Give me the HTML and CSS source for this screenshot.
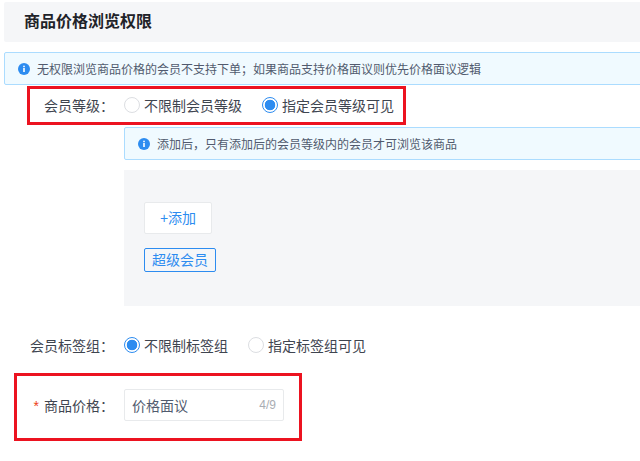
FILE: index.html
```html
<!DOCTYPE html>
<html lang="zh-CN">
<head>
    <meta charset="UTF-8">
    <title>商品价格浏览权限</title>
    <link rel="stylesheet" href="styles.css">
</head>
<body>

<div class="page">
    <h2 class="section-title">商品价格浏览权限</h2>

    <div class="alert">
        <svg class="info-icon" viewBox="0 0 12 12"><circle cx="6" cy="6" r="6" fill="#2d8cf0"/><rect x="5.2" y="5" width="1.6" height="4" fill="#fff"/><rect x="5.2" y="2.7" width="1.6" height="1.5" fill="#fff"/></svg>
        无权限浏览商品价格的会员不支持下单；如果商品支持价格面议则优先价格面议逻辑
    </div>

    <div class="form-row row-level">
        <label class="form-label">会员等级：</label>
        <div class="radio-group">
            <span class="radio"><i class="radio-dot"></i>不限制会员等级</span>
            <span class="radio"><i class="radio-dot checked"></i>指定会员等级可见</span>
        </div>
    </div>

    <div class="indent">
        <div class="alert">
            <svg class="info-icon" viewBox="0 0 12 12"><circle cx="6" cy="6" r="6" fill="#2d8cf0"/><rect x="5.2" y="5" width="1.6" height="4" fill="#fff"/><rect x="5.2" y="2.7" width="1.6" height="1.5" fill="#fff"/></svg>
            添加后，只有添加后的会员等级内的会员才可浏览该商品
        </div>
        <div class="level-panel">
            <button class="add-button">+添加</button>
            <span class="tag">超级会员</span>
        </div>
    </div>

    <div class="form-row row-tags">
        <label class="form-label">会员标签组：</label>
        <div class="radio-group">
            <span class="radio"><i class="radio-dot checked"></i>不限制标签组</span>
            <span class="radio"><i class="radio-dot"></i>指定标签组可见</span>
        </div>
    </div>

    <div class="form-row row-price">
        <label class="form-label"><em class="required">*</em>商品价格：</label>
        <div class="price-input">
            <span>价格面议</span>
            <span class="count">4/9</span>
        </div>
    </div>
</div>

<div class="red-box box-level"></div>
<div class="red-box box-price"></div>

</body>
</html>
```

FILE: styles.css
```css
html, body {
    margin: 0;
    height: 461px;
    overflow: hidden;
    background: #fff;
}
body {
    position: relative;
    font-family: "Liberation Sans", "Noto Sans CJK SC", sans-serif;
    font-size: 14px;
    color: #515a6e;
}
.page {
    padding: 2px 0 0 4px;
    width: 660px;
}
.section-title {
    height: 40px;
    margin: 0 0 10px;
    padding-left: 20px;
    line-height: 40px;
    font-size: 16px;
    font-weight: bold;
    color: #1f2329;
    background: #f5f6f8;
    border-radius: 2px;
}
.alert {
    display: flex;
    align-items: center;
    height: 31px;
    padding-left: 13px;
    font-size: 12px;
    color: #515a6e;
    background: #f0faff;
    border: 1px solid #abdcff;
    border-radius: 2px;
}
.info-icon {
    width: 12px;
    height: 12px;
    margin-right: 7px;
}
.form-row {
    display: flex;
    align-items: center;
    color: #3f4550;
}
.form-label {
    width: 110px;
    margin-right: 10px;
    text-align: right;
}
.radio-group {
    display: flex;
    gap: 20px;
}
.radio {
    display: flex;
    align-items: center;
}
.radio-dot {
    box-sizing: border-box;
    width: 16px;
    height: 16px;
    margin-right: 4px;
    border: 1px solid #dcdee2;
    border-radius: 50%;
    background: #fff;
}
.radio-dot.checked {
    border-color: #2d8cf0;
    background: radial-gradient(circle, #2d8cf0 5px, #fff 5.6px);
}
.row-level {
    box-sizing: border-box;
    height: 42px;
    padding-bottom: 2px;
}
.indent {
    margin-left: 120px;
}
.level-panel {
    display: flex;
    flex-direction: column;
    align-items: flex-start;
    gap: 14px;
    height: 136px;
    box-sizing: border-box;
    margin-top: 10px;
    padding: 32px 0 0 20px;
    background: #f5f6f8;
}
.add-button {
    width: 68px;
    height: 32px;
    padding: 0 0 2px;
    font-family: inherit;
    font-size: 14px;
    color: #2d8cf0;
    background: #fff;
    border: 1px solid #e8eaec;
    border-radius: 2px;
}
.tag {
    box-sizing: border-box;
    width: 72px;
    height: 24px;
    line-height: 22px;
    text-align: center;
    color: #2d8cf0;
    border: 1px solid #2d8cf0;
    border-radius: 2px;
}
.row-tags {
    height: 32px;
    margin-top: 23px;
}
.row-price {
    height: 32px;
    margin-top: 28px;
}
.required {
    margin-right: 5px;
    font-style: normal;
    color: #ed4014;
}
.price-input {
    display: flex;
    flex: none;
    justify-content: space-between;
    align-items: center;
    box-sizing: border-box;
    width: 160px;
    height: 32px;
    padding: 0 7px;
    color: #515a6e;
    border: 1px solid #e8eaec;
    border-radius: 2px;
}
.count {
    font-size: 12px;
    color: #a9adb3;
}
/* annotation boxes drawn over the form */
.red-box {
    position: absolute;
    box-sizing: border-box;
    border: 3px solid #ec1320;
}
.box-level {
    left: 27px;
    top: 86px;
    width: 379px;
    height: 39px;
}
.box-price {
    left: 14px;
    top: 373px;
    width: 288px;
    height: 68px;
}
```
